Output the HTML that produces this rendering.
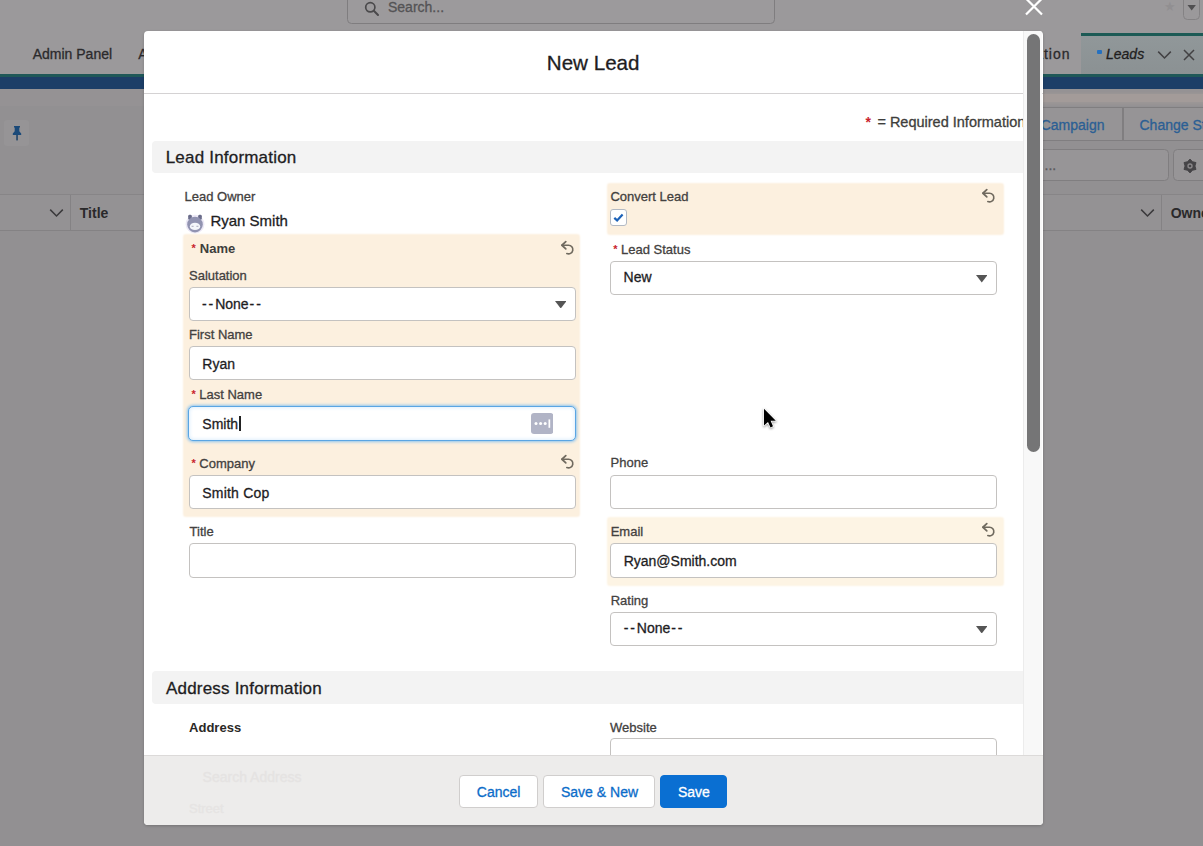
<!DOCTYPE html>
<html lang="en"><head><meta charset="utf-8"><title>New Lead</title>
<style>
*{box-sizing:border-box;margin:0;padding:0}
html,body{width:1203px;height:846px;overflow:hidden}
body{background:#929092;font-family:"Liberation Sans",Arial,sans-serif;position:relative}
.t{position:absolute;white-space:nowrap;-webkit-text-stroke:0.3px currentColor}
.a{position:absolute;display:block}
.bg{position:absolute}
.inp{position:absolute;background:#fff;border:1px solid #c4c2c0;border-radius:4px}
.gb{position:absolute;border:1.5px solid #807e80;border-radius:4.5px;background:#969496}
#modal{position:absolute;left:143.5px;top:31px;width:899px;height:794px;background:#fff;border-radius:4px;overflow:hidden;box-shadow:0 1px 3px rgba(0,0,0,.2)}
#content{position:absolute;left:0;top:0;width:880px;height:725px;overflow:hidden}
.hl{position:absolute;background:#fcf0df;border-radius:2px;box-shadow:0 0 2px 1px #fcf0df}
.btn{position:absolute;border:1px solid #d0cecd;border-radius:4px;background:#fff}
</style></head><body>

<div class="bg" style="left:0;top:0;width:1203px;height:74px;background:#9b999b"></div>
<div class="bg" style="left:1081px;top:33px;width:122px;height:41px;background:linear-gradient(#91989a,#8b9193)"></div>
<div class="bg" style="left:1081px;top:33px;width:122px;height:3.2px;background:#1c5a55"></div>
<div class="bg" style="left:0;top:73.5px;width:1203px;height:3px;background:#1f5858"></div>
<div class="bg" style="left:0;top:76.5px;width:1203px;height:12.5px;background:#1c3e67"></div>
<div class="bg" style="left:0;top:89px;width:1203px;height:17px;background:#959294"></div>
<div class="bg" style="left:1043px;top:93.5px;width:160px;height:8px;background:#a39b99;box-shadow:0 0 2px 1.5px #9c9796"></div>
<div class="gb" style="left:346.5px;top:-10px;width:428px;height:33.5px;background:#9c9a9c;border-color:#7f7d7f"></div>
<svg class="a" style="left:364px;top:1px" width="16" height="16" viewBox="0 0 16 16"><circle cx="6.3" cy="6.3" r="4.6" fill="none" stroke="#4a494b" stroke-width="1.7"/><path d="M9.8 9.8L14 14" stroke="#4a494b" stroke-width="2" stroke-linecap="round"/></svg>
<div class="t" style="left:388px;top:0.15px;font-size:14px;line-height:14px;color:#545355;font-weight:400;font-style:normal;">Search...</div>
<svg class="a" style="left:1024px;top:-3px" width="20" height="20" viewBox="0 0 20 20"><path d="M2 1.5L18 17.5M18 1.5L2 17.5" stroke="#fff" stroke-width="2.2"/></svg>
<div class="t" style="left:1163.5px;top:-1.5px;font-size:13px;line-height:16px;color:#918f91;-webkit-text-stroke:0">&#9733;</div>
<div class="gb" style="left:1183px;top:-6px;width:17px;height:25.5px;background:#9b999b;border-color:#848284"></div>
<svg class="a" style="left:1187.3px;top:5px" width="9.4" height="5.6" viewBox="0 0 9 6"><path d="M0 0H9L4.5 6Z" fill="#504f51"/></svg>
<div class="t" style="left:32.7px;top:46.55px;font-size:14px;line-height:14px;color:#2b2a2c;font-weight:400;font-style:normal;">Admin Panel</div>
<div class="t" style="left:138.2px;top:46.55px;font-size:14px;line-height:14px;color:#2b2a2c;font-weight:400;font-style:normal;">Accounts</div>
<div class="t" style="right:132.5px;top:47.15px;font-size:14px;line-height:14px;color:#2b2a2c;font-weight:400;font-style:normal;letter-spacing:1px;">Administration</div>
<div class="bg" style="left:1097.2px;top:50.2px;width:4.6px;height:4.2px;background:#2571c0;border-radius:1px"></div>
<div class="t" style="left:1106px;top:47.15px;font-size:14px;line-height:14px;color:#1f1e20;font-weight:400;font-style:italic;">Leads</div>
<svg class="a" style="left:1157px;top:50px" width="15" height="10" viewBox="0 0 15 10"><path d="M1.2 1.6L7.5 8L13.8 1.6" fill="none" stroke="#424143" stroke-width="1.5"/></svg>
<svg class="a" style="left:1183px;top:49px" width="12" height="12" viewBox="0 0 12 12"><path d="M1 1L11 11M11 1L1 11" stroke="#424143" stroke-width="1.5"/></svg>
<div class="bg" style="left:4px;top:120px;width:25px;height:26px;background:#969496;border-radius:3px"></div>
<svg class="a" style="left:11px;top:125px" width="12" height="17" viewBox="0 0 12 17"><path d="M3 1H9V2.2L8.3 2.8V6.2L10.2 8.6V10H1.8V8.6L3.7 6.2V2.8L3 2.2Z" fill="#1b4a79"/><rect x="5.2" y="10" width="1.7" height="5.4" fill="#27496b"/></svg>
<div class="gb" style="left:1000px;top:106.5px;width:220px;height:34.5px"></div>
<div class="bg" style="left:1122px;top:107px;width:1.5px;height:34px;background:#807e80"></div>
<div class="t" style="right:98.5px;top:118.35px;font-size:14px;line-height:14px;color:#2b5f94;font-weight:400;font-style:normal;">Add to Campaign</div>
<div class="t" style="left:1139.5px;top:118.35px;font-size:14px;line-height:14px;color:#2b5f94;font-weight:400;font-style:normal;">Change Status</div>
<div class="gb" style="left:900px;top:148.5px;width:268.5px;height:32.5px;background:#979597"></div>
<div class="t" style="left:1044.5px;top:158.15px;font-size:14px;line-height:14px;color:#5b5a5c;font-weight:400;font-style:normal;">...</div>
<div class="gb" style="left:1173px;top:148.5px;width:50px;height:32.5px;background:#979597"></div>
<svg class="a" style="left:1183px;top:159.4px" width="14" height="14" viewBox="0 0 14 14"><polygon points="7.00,0.10 9.45,2.76 12.98,3.55 11.90,7.00 12.98,10.45 9.45,11.24 7.00,13.90 4.55,11.24 1.02,10.45 2.10,7.00 1.02,3.55 4.55,2.76" fill="#454447" stroke="#454447" stroke-width="1" stroke-linejoin="round"/><circle cx="7" cy="7" r="2.7" fill="#8a888a"/><circle cx="7" cy="7" r="1.3" fill="#454447"/></svg>
<div class="bg" style="left:0;top:194px;width:1203px;height:37px;background:#949294;border-top:1px solid #878587;border-bottom:1px solid #848284"></div>
<div class="bg" style="left:69.5px;top:195px;width:1.3px;height:35px;background:#848284"></div>
<div class="bg" style="left:1161px;top:195px;width:1.3px;height:35px;background:#848284"></div>
<svg class="a" style="left:49px;top:208px" width="15" height="10" viewBox="0 0 15 10"><path d="M1.2 1.6L7.5 8L13.8 1.6" fill="none" stroke="#3b3a3c" stroke-width="1.5"/></svg>
<svg class="a" style="left:1140px;top:208px" width="15" height="10" viewBox="0 0 15 10"><path d="M1.2 1.6L7.5 8L13.8 1.6" fill="none" stroke="#3b3a3c" stroke-width="1.5"/></svg>
<div class="t" style="left:79.8px;top:205.85px;font-size:14px;line-height:14px;color:#2a292b;font-weight:700;font-style:normal;-webkit-text-stroke:0;">Title</div>
<div class="t" style="left:1170.7px;top:205.85px;font-size:14px;line-height:14px;color:#2a292b;font-weight:700;font-style:normal;-webkit-text-stroke:0;">Owner</div>
<div id="modal">
<div class="t" style="left:403.3px;top:21.56px;font-size:20.6px;line-height:20.6px;color:#1e1d1f;font-weight:400;font-style:normal;">New Lead</div>
<div class="bg" style="left:0.0px;top:61.5px;width:899.00px;height:1.50px;background:#d4d2d3;"></div>
<div id="content">
<div class="t" style="left:721.9px;top:83.75px;font-size:14px;line-height:14px;color:#c9232d;font-weight:700;font-style:normal;-webkit-text-stroke:0;">*</div>
<div class="t" style="left:733.9px;top:83.93px;font-size:14.5px;line-height:14.5px;color:#3e3e3c;font-weight:400;font-style:normal;">= Required Information</div>
<div class="bg" style="left:8.5px;top:110.2px;width:878.00px;height:32.00px;background:#f3f3f3;border-radius:4px;"></div>
<div class="t" style="left:22.2px;top:118.21px;font-size:17px;line-height:17px;color:#1e1d1f;font-weight:400;font-style:normal;letter-spacing:0.2px;">Lead Information</div>
<div class="t" style="left:41.0px;top:159.20px;font-size:13px;line-height:13px;color:#434140;font-weight:400;font-style:normal;">Lead Owner</div>
<svg class="a" style="left:41.5px;top:181.5px" width="20" height="21" viewBox="0 0 20 21"><circle cx="10" cy="11.2" r="9.4" fill="#ece9f6"/><rect x="3.2" y="1.8" width="3.6" height="5" rx="1.4" fill="#6a6c8a"/><rect x="13.2" y="1.8" width="3.6" height="5" rx="1.4" fill="#6a6c8a"/><circle cx="10" cy="11.6" r="7.8" fill="#9193b1"/><ellipse cx="10" cy="13.4" rx="5.2" ry="3.7" fill="#f4f6fb"/><rect x="6.6" y="12.8" width="2" height="1" fill="#aab" /><rect x="11.4" y="12.8" width="2" height="1" fill="#aab"/></svg>
<div class="t" style="left:66.9px;top:181.80px;font-size:15px;line-height:15px;color:#1e1d1f;font-weight:400;font-style:normal;">Ryan Smith</div>
<div class="hl" style="left:40.8px;top:204.2px;width:394.50px;height:281.00px;"></div>
<div class="t" style="left:48.1px;top:212.49px;font-size:11px;line-height:11px;color:#c9232d;font-weight:700;font-style:normal;-webkit-text-stroke:0;">*</div>
<div class="t" style="left:56.3px;top:211.00px;font-size:13px;line-height:13px;color:#3e3e3c;font-weight:700;font-style:normal;-webkit-text-stroke:0;">Name</div>
<svg class="a" style="left:416.09999999999997px;top:208.8px" width="15.8" height="15.8" viewBox="0 0 18 18"><path d="M2.2 6 H9.6 A4.9 4.9 0 1 1 7.8 15.4" fill="none" stroke="#706a5f" stroke-width="1.9" stroke-linecap="round"/><path d="M6.6 1.9 L2.2 6 L6.6 10.1" fill="none" stroke="#706a5f" stroke-width="2" stroke-linecap="round" stroke-linejoin="round"/></svg>
<div class="t" style="left:45.5px;top:237.60px;font-size:13px;line-height:13px;color:#434140;font-weight:400;font-style:normal;">Salutation</div>
<div class="inp" style="left:45.5px;top:256px;width:387.00px;height:33.60px;"></div>
<div class="t" style="left:58.5px;top:265.65px;font-size:14px;line-height:14px;color:#1e1d1f;font-weight:400;font-style:normal;"><span style="letter-spacing:1.9px">--</span>None<span style="letter-spacing:1.9px;margin-left:1px">--</span></div>
<svg class="a" style="left:411.0px;top:269.6px" width="11.5" height="7.5" viewBox="0 0 11.5 7.5"><path d="M0 0H11.5L5.75 7.5Z" fill="#555"/></svg>
<div class="t" style="left:45.5px;top:296.60px;font-size:13px;line-height:13px;color:#434140;font-weight:400;font-style:normal;">First Name</div>
<div class="inp" style="left:45.5px;top:315.4px;width:387.00px;height:34.00px;"></div>
<div class="t" style="left:58.8px;top:325.95px;font-size:14px;line-height:14px;color:#1e1d1f;font-weight:400;font-style:normal;">Ryan</div>
<div class="t" style="left:48.1px;top:358.39px;font-size:11px;line-height:11px;color:#c9232d;font-weight:700;font-style:normal;-webkit-text-stroke:0;">*</div>
<div class="t" style="left:55.8px;top:356.90px;font-size:13px;line-height:13px;color:#434140;font-weight:400;font-style:normal;">Last Name</div>
<div class="inp" style="left:44.3px;top:374.6px;width:388.60px;height:35.80px;border:1.4px solid #5aa5e3;box-shadow:0 0 3px 1px #8dc4ef, inset 0 0 4px #cfe7fa;border-radius:5px;"></div>
<div class="t" style="left:58.8px;top:385.65px;font-size:14px;line-height:14px;color:#1e1d1f;font-weight:400;font-style:normal;">Smith</div>
<div class="bg" style="left:95.9px;top:384.8px;width:1.40px;height:15.60px;background:#222;"></div>
<svg class="a" style="left:387.29999999999995px;top:381.8px" width="22.4" height="21" viewBox="0 0 22.4 21"><rect width="22.4" height="21" rx="3.2" fill="#b1b4c6"/><circle cx="5" cy="10.6" r="1.5" fill="#fff"/><circle cx="9.6" cy="10.6" r="1.5" fill="#fff"/><circle cx="14.2" cy="10.6" r="1.5" fill="#fff"/><rect x="17.5" y="6.4" width="1.7" height="8.4" fill="#fff"/></svg>
<div class="t" style="left:48.1px;top:426.99px;font-size:11px;line-height:11px;color:#c9232d;font-weight:700;font-style:normal;-webkit-text-stroke:0;">*</div>
<div class="t" style="left:55.8px;top:425.50px;font-size:13px;line-height:13px;color:#434140;font-weight:400;font-style:normal;">Company</div>
<svg class="a" style="left:416.09999999999997px;top:422.79999999999995px" width="15.8" height="15.8" viewBox="0 0 18 18"><path d="M2.2 6 H9.6 A4.9 4.9 0 1 1 7.8 15.4" fill="none" stroke="#706a5f" stroke-width="1.9" stroke-linecap="round"/><path d="M6.6 1.9 L2.2 6 L6.6 10.1" fill="none" stroke="#706a5f" stroke-width="2" stroke-linecap="round" stroke-linejoin="round"/></svg>
<div class="inp" style="left:45.5px;top:443.9px;width:387.00px;height:33.70px;"></div>
<div class="t" style="left:58.8px;top:454.65px;font-size:14px;line-height:14px;color:#1e1d1f;font-weight:400;font-style:normal;letter-spacing:0.2px;">Smith Cop</div>
<div class="t" style="left:46.1px;top:493.50px;font-size:13px;line-height:13px;color:#434140;font-weight:400;font-style:normal;">Title</div>
<div class="inp" style="left:45.5px;top:512px;width:387.00px;height:34.50px;"></div>
<div class="hl" style="left:464.9px;top:153px;width:394.20px;height:49.80px;"></div>
<div class="t" style="left:466.9px;top:159.00px;font-size:13px;line-height:13px;color:#434140;font-weight:400;font-style:normal;">Convert Lead</div>
<svg class="a" style="left:837.5px;top:156.8px" width="15.8" height="15.8" viewBox="0 0 18 18"><path d="M2.2 6 H9.6 A4.9 4.9 0 1 1 7.8 15.4" fill="none" stroke="#706a5f" stroke-width="1.9" stroke-linecap="round"/><path d="M6.6 1.9 L2.2 6 L6.6 10.1" fill="none" stroke="#706a5f" stroke-width="2" stroke-linecap="round" stroke-linejoin="round"/></svg>
<div class="inp" style="left:466.9px;top:177.5px;width:16.90px;height:17.00px;border-radius:3px;border-color:#b3bac4;"></div>
<svg class="a" style="left:466.9px;top:177.5px" width="17" height="17" viewBox="0 0 17 17"><path d="M4.3 8.9L7.1 11.4L12.6 5.6" fill="none" stroke="#1c62b8" stroke-width="2.2"/></svg>
<div class="t" style="left:469.8px;top:213.09px;font-size:11px;line-height:11px;color:#c9232d;font-weight:700;font-style:normal;-webkit-text-stroke:0;">*</div>
<div class="t" style="left:477.5px;top:211.60px;font-size:13px;line-height:13px;color:#434140;font-weight:400;font-style:normal;">Lead Status</div>
<div class="inp" style="left:466.8px;top:230.3px;width:386.70px;height:33.30px;"></div>
<div class="t" style="left:480.1px;top:239.45px;font-size:14px;line-height:14px;color:#1e1d1f;font-weight:400;font-style:normal;">New</div>
<svg class="a" style="left:832.3px;top:244px" width="11.5" height="7.5" viewBox="0 0 11.5 7.5"><path d="M0 0H11.5L5.75 7.5Z" fill="#555"/></svg>
<div class="t" style="left:467.1px;top:425.20px;font-size:13px;line-height:13px;color:#434140;font-weight:400;font-style:normal;">Phone</div>
<div class="inp" style="left:466.8px;top:444.1px;width:386.70px;height:33.50px;"></div>
<div class="hl" style="left:464.9px;top:487.4px;width:394.20px;height:66.20px;background:#fdf4e4;box-shadow:0 0 2px 1px #fdf4e4;"></div>
<div class="t" style="left:467.2px;top:493.80px;font-size:13px;line-height:13px;color:#434140;font-weight:400;font-style:normal;">Email</div>
<svg class="a" style="left:837.5px;top:491.4px" width="15.8" height="15.8" viewBox="0 0 18 18"><path d="M2.2 6 H9.6 A4.9 4.9 0 1 1 7.8 15.4" fill="none" stroke="#706a5f" stroke-width="1.9" stroke-linecap="round"/><path d="M6.6 1.9 L2.2 6 L6.6 10.1" fill="none" stroke="#706a5f" stroke-width="2" stroke-linecap="round" stroke-linejoin="round"/></svg>
<div class="inp" style="left:466.8px;top:512px;width:386.70px;height:34.50px;"></div>
<div class="t" style="left:480.2px;top:522.75px;font-size:14px;line-height:14px;color:#1e1d1f;font-weight:400;font-style:normal;">Ryan@Smith.com</div>
<div class="t" style="left:467.2px;top:563.00px;font-size:13px;line-height:13px;color:#434140;font-weight:400;font-style:normal;">Rating</div>
<div class="inp" style="left:466.8px;top:580.7px;width:386.70px;height:34.00px;"></div>
<div class="t" style="left:480.2px;top:590.15px;font-size:14px;line-height:14px;color:#1e1d1f;font-weight:400;font-style:normal;"><span style="letter-spacing:1.9px">--</span>None<span style="letter-spacing:1.9px;margin-left:1px">--</span></div>
<svg class="a" style="left:832.3px;top:594.6px" width="11.5" height="7.5" viewBox="0 0 11.5 7.5"><path d="M0 0H11.5L5.75 7.5Z" fill="#555"/></svg>
<div class="bg" style="left:8.5px;top:640.4px;width:878.00px;height:32.90px;background:#f3f3f3;border-radius:4px;"></div>
<div class="t" style="left:22.5px;top:649.11px;font-size:17px;line-height:17px;color:#1e1d1f;font-weight:400;font-style:normal;letter-spacing:0.2px;">Address Information</div>
<div class="t" style="left:45.6px;top:689.80px;font-size:13px;line-height:13px;color:#2b2826;font-weight:700;font-style:normal;-webkit-text-stroke:0;">Address</div>
<div class="t" style="left:466.5px;top:689.90px;font-size:13px;line-height:13px;color:#434140;font-weight:400;font-style:normal;">Website</div>
<div class="inp" style="left:466.8px;top:707.4px;width:387.00px;height:34.00px;"></div>
</div>
<div class="bg" style="left:879.9px;top:0px;width:19.10px;height:725.00px;background:#f8f8f8;border-left:1px solid #ececec;"></div>
<div class="bg" style="left:883.7px;top:2.5px;width:12.80px;height:418.50px;background:#757576;border-radius:6.5px;"></div>
<div class="bg" style="left:0.0px;top:724.4px;width:899.00px;height:69.60px;background:#edeceb;border-top:1.5px solid #dcdad9;"></div>
<div class="t" style="left:59.1px;top:739.15px;font-size:14px;line-height:14px;color:#e5e3e2;font-weight:400;font-style:normal;">Search Address</div>
<div class="t" style="left:45.5px;top:770.50px;font-size:13px;line-height:13px;color:#e6e4e3;font-weight:400;font-style:normal;">Street</div>
<div class="btn" style="left:315.7px;top:743.6px;width:79.20px;height:33.20px;"></div>
<div class="t" style="left:333.3px;top:753.75px;font-size:14px;line-height:14px;color:#0b6cc9;font-weight:400;font-style:normal;">Cancel</div>
<div class="btn" style="left:399.8px;top:743.6px;width:112.10px;height:33.20px;"></div>
<div class="t" style="left:417.5px;top:753.75px;font-size:14px;line-height:14px;color:#0b6cc9;font-weight:400;font-style:normal;">Save &amp; New</div>
<div class="btn" style="left:516.7px;top:743.6px;width:66.60px;height:33.20px;background:#0a6fd2;border-color:#0a6fd2;"></div>
<div class="t" style="left:534.5px;top:753.75px;font-size:14px;line-height:14px;color:#fff;font-weight:400;font-style:normal;">Save</div>
</div>
<svg class="a" style="left:758px;top:404px;filter:drop-shadow(0 1px 1.2px rgba(0,0,0,.4))" width="24" height="30" viewBox="0 0 24 30"><path d="M6 4.8V21.6L10 17.9L12.5 23.4L15 22.3L12.6 16.7H17.8Z" fill="#000" stroke="#fff" stroke-width="1.5" paint-order="stroke" stroke-linejoin="round"/></svg>
</body></html>
